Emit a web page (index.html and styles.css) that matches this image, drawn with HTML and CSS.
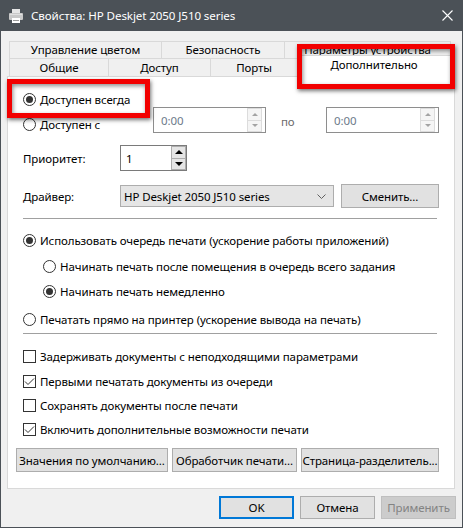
FILE: index.html
```
<!DOCTYPE html>
<html lang="ru">
<head>
<meta charset="utf-8">
<title>Свойства: HP Deskjet 2050 J510 series</title>
<link rel="stylesheet" href="styles.css">
</head>
<body>
<div class="window">
  <div class="titlebar">
    <svg class="app-icon" width="16" height="16" viewBox="0 0 16 16">
      <rect x="4" y="1" width="8" height="4" fill="#e6e6e6"/>
      <rect x="1" y="5" width="14" height="7" rx="1" fill="#c9c9c9"/>
      <rect x="2" y="6" width="12" height="1" fill="#e0e0e0"/>
      <rect x="4" y="10" width="8" height="5" fill="#ffffff"/>
      <rect x="5" y="12" width="6" height="1" fill="#9a9a9a"/>
    </svg>
    <span class="title">Свойства: HP Deskjet 2050 J510 series</span>
    <svg class="close" width="11" height="11" viewBox="0 0 11 11">
      <path d="M0.5 0.5 L10.5 10.5 M10.5 0.5 L0.5 10.5" stroke="#ffffff" stroke-width="1.1" fill="none"/>
    </svg>
  </div>
  <div class="client">
    <div class="tabs">
      <div class="tabrow">
        <div class="tab w152">Управление цветом</div>
        <div class="tab w123">Безопасность</div>
        <div class="tab w167">Параметры устройства</div>
      </div>
      <div class="tabrow">
        <div class="tab w99">Общие</div>
        <div class="tab w102">Доступ</div>
        <div class="tab w87">Порты</div>
        <div class="tab w154 selected">Дополнительно</div>
      </div>
    </div>
    <div class="panel">
      <div class="row r-always">
        <span class="radio checked"></span><span class="lbl">Доступен всегда</span>
      </div>
      <div class="row r-from">
        <div class="from-label"><span class="radio"></span><span class="lbl">Доступен с</span></div>
        <div class="timebox">
          <span class="val">0:00</span>
          <div class="spin disabled"><span class="up"></span><span class="down"></span></div>
        </div>
        <div class="po">по</div>
        <div class="timebox">
          <span class="val">0:00</span>
          <div class="spin disabled"><span class="up"></span><span class="down"></span></div>
        </div>
      </div>
      <div class="row r-prio">
        <div class="field-label">Приоритет:</div>
        <div class="prio">
          <span class="prio-val">1</span>
          <div class="spin active"><span class="up"></span><span class="down"></span></div>
        </div>
      </div>
      <div class="row r-driver">
        <div class="field-label">Драйвер:</div>
        <div class="combo">
          <span>HP Deskjet 2050 J510 series</span>
          <svg class="chev" width="9" height="5" viewBox="0 0 9 5"><path d="M0.5 0.5 L4.5 4.5 L8.5 0.5" stroke="#606060" fill="none"/></svg>
        </div>
        <div class="btn change">Сменить...</div>
      </div>
      <div class="sep sep1"></div>
      <div class="row opt q1"><span class="radio checked"></span><span class="lbl">Использовать очередь печати (ускорение работы приложений)</span></div>
      <div class="row opt q2 sub"><span class="radio"></span><span class="lbl">Начинать печать после помещения в очередь всего задания</span></div>
      <div class="row opt q3 sub"><span class="radio checked"></span><span class="lbl">Начинать печать немедленно</span></div>
      <div class="row opt q4"><span class="radio"></span><span class="lbl">Печатать прямо на принтер (ускорение вывода на печать)</span></div>
      <div class="sep sep2"></div>
      <div class="row opt c1"><span class="check"></span><span class="lbl">Задерживать документы с неподходящими параметрами</span></div>
      <div class="row opt c2"><span class="check checked"><svg width="11" height="11" viewBox="0 0 11 11"><path d="M1 5.5 L4 8.5 L10 2.5" stroke="#333" stroke-width="1" fill="none"/></svg></span><span class="lbl">Первыми печатать документы из очереди</span></div>
      <div class="row opt c3"><span class="check"></span><span class="lbl">Сохранять документы после печати</span></div>
      <div class="row opt c4"><span class="check checked"><svg width="11" height="11" viewBox="0 0 11 11"><path d="M1 5.5 L4 8.5 L10 2.5" stroke="#333" stroke-width="1" fill="none"/></svg></span><span class="lbl">Включить дополнительные возможности печати</span></div>
      <div class="row panel-btns">
        <div class="btn b1">Значения по умолчанию...</div>
        <div class="btn b2">Обработчик печати...</div>
        <div class="btn b3">Страница-разделитель...</div>
      </div>
    </div>
    <div class="footer">
      <div class="btn fbtn default">OK</div>
      <div class="btn fbtn">Отмена</div>
      <div class="btn fbtn disabled">Применить</div>
    </div>
  </div>
  <div class="hl hl-tab"></div>
  <div class="hl hl-radio"></div>
</div>
</body>
</html>
```
FILE: styles.css
```
* { box-sizing: border-box; }
html, body { margin: 0; padding: 0; }
body {
  font-family: "Noto Sans", "Liberation Sans", sans-serif;
  font-size: 11.5px;
  letter-spacing: -0.1px;
  color: #000;
  background: #ffffff;
}
.window {
  position: relative;
  width: 463px;
  height: 528px;
  display: flex;
  flex-direction: column;
}
.titlebar {
  height: 31px;
  flex: none;
  background: #4b5157;
  color: #ffffff;
  display: flex;
  align-items: center;
  padding-left: 8px;
  font-size: 11.6px;
}
.app-icon { flex: none; margin-right: 7px; }
.title { white-space: nowrap; }
.close { margin-left: auto; margin-right: 10px; flex: none; }

.client {
  flex: 1;
  background: #f0f0f0;
  border: 1px solid #4b5157;
  border-top: 0;
  padding-top: 10px;
  display: flex;
  flex-direction: column;
}
.tabs {
  margin-left: 8px;
  width: 442px;
  height: 35px;
  flex: none;
  display: flex;
  flex-direction: column;
  position: relative;
  z-index: 2;
}
.tabrow { display: flex; height: 17px; }
.tabrow + .tabrow { height: 18px; }
.tab {
  border-top: 1px solid #d9d9d9;
  border-left: 1px solid #d9d9d9;
  background: #f0f0f0;
  text-align: center;
  line-height: 16px;
  white-space: nowrap;
  overflow: hidden;
}
.tab:last-child { border-right: 1px solid #d9d9d9; }
.tabrow + .tabrow .tab { line-height: 17px; }
.w152 { width: 152px; }
.w123 { width: 123px; }
.w167 { width: 167px; }
.w99 { width: 99px; }
.w102 { width: 102px; }
.w87 { width: 87px; }
.w154 { width: 154px; }
.tab.selected {
  position: relative;
  top: -3px;
  height: 22px;
  background: #ffffff;
  line-height: 19px;
}

.panel {
  margin-left: 6px;
  width: 448px;
  height: 413px;
  flex: none;
  background: #ffffff;
  border: 1px solid #d9d9d9;
  padding: 0 15px;
  display: flex;
  flex-direction: column;
}
.row { display: flex; align-items: center; white-space: nowrap; flex: none; }
.lbl { margin-left: 4px; }
.radio {
  width: 13px;
  height: 13px;
  border: 1px solid #333333;
  border-radius: 50%;
  background: #ffffff;
  flex: none;
  display: flex;
  align-items: center;
  justify-content: center;
}
.radio.checked::after {
  content: "";
  width: 7px;
  height: 7px;
  border-radius: 50%;
  background: #333333;
}
.check {
  width: 13px;
  height: 13px;
  border: 1px solid #333333;
  background: #ffffff;
  flex: none;
  display: flex;
}
.check svg { display: block; }

.r-always { margin-top: 14px; height: 16px; }
.r-from { height: 26px; }
.from-label { width: 130px; display: flex; align-items: center; align-self: flex-start; margin-top: 8px; height: 18px; }
.timebox {
  width: 113px;
  height: 26px;
  border: 1px solid #8e8e8e;
  background: #ffffff;
  display: flex;
  align-items: center;
  padding-left: 7px;
  color: #6d7a8a;
}
.val { flex: 1; margin-top: 1px; }
.po { width: 60px; padding-left: 15px; color: #6d6d6d; margin-top: 3px; }
.spin {
  display: flex;
  flex-direction: column;
  width: 15px;
  height: 24px;
  flex: none;
}
.spin span {
  flex: 1;
  display: flex;
  align-items: center;
  justify-content: center;
  border: 1px solid #dcdcdc;
  background: #f5f5f5;
}
.spin span + span { border-top: 0; }
.spin .up::after, .spin .down::after {
  content: "";
  width: 0;
  height: 0;
  border-left: 3px solid transparent;
  border-right: 3px solid transparent;
}
.spin .up::after { border-bottom: 3px solid #a3a3a3; }
.spin .down::after { border-top: 3px solid #a3a3a3; }
.spin.disabled { margin-right: 3px; }
.spin.active span { border-color: #adadad; background: #e5e5e5; }
.spin.active .up::after { border-bottom-color: #000; border-left-width: 4px; border-right-width: 4px; border-bottom-width: 4px; }
.spin.active .down::after { border-top-color: #000; border-left-width: 4px; border-right-width: 4px; border-top-width: 4px; }

.r-prio { margin-top: 12px; height: 26px; }
.field-label { width: 97px; }
.prio {
  width: 67px;
  height: 26px;
  border: 1px solid #7a7a7a;
  display: flex;
  align-items: center;
  padding-left: 5px;
}
.prio-val { flex: 1; }

.r-driver { margin-top: 13px; height: 24px; }
.combo {
  width: 214px;
  height: 22px;
  border: 1px solid #adadad;
  background: #e5e5e5;
  display: flex;
  align-items: center;
  padding-left: 3px;
  padding-right: 7px;
}
.combo span { flex: 1; }
.chev { display: block; }
.btn {
  border: 1px solid #adadad;
  background: #e1e1e1;
  display: flex;
  align-items: center;
  justify-content: center;
  white-space: nowrap;
}
.change { width: 98px; height: 24px; margin-left: 7px; }

.sep { height: 1px; background: #a0a0a0; flex: none; width: 414px; }
.sep1 { margin-top: 10px; }
.sep2 { margin-top: 5px; }
.opt { height: 18px; }
.sub { padding-left: 20px; }
.q1 { margin-top: 12px; }
.q2 { margin-top: 8px; }
.q3 { margin-top: 7px; }
.q4 { margin-top: 10px; }
.c1 { margin-top: 13px; }
.c2 { margin-top: 7px; }
.c3, .c4 { margin-top: 6px; }

.panel-btns { margin-top: 10px; height: 24px; margin-left: -7px; gap: 4px; }
.panel-btns .btn { height: 24px; }
.b1 { width: 153px; }
.b2 { width: 126px; }
.b3 { width: 139px; }

.footer {
  margin-top: 7px;
  display: flex;
  justify-content: flex-end;
  gap: 6px;
  padding-right: 6px;
}
.fbtn { width: 75px; height: 23px; }
.fbtn.default { border: 2px solid #0078d7; }
.fbtn.disabled { background: #cccccc; border-color: #bfbfbf; color: #838383; }

.hl {
  position: absolute;
  border: 5px solid #f20000;
  box-shadow: 1px 2px 4px rgba(0, 0, 0, 0.55), inset 1px 2px 4px rgba(0, 0, 0, 0.45);
  z-index: 5;
  pointer-events: none;
}
.hl-tab { left: 297px; top: 44px; width: 158px; height: 45px; }
.hl-radio { left: 7px; top: 79px; width: 143px; height: 39px; }
```
